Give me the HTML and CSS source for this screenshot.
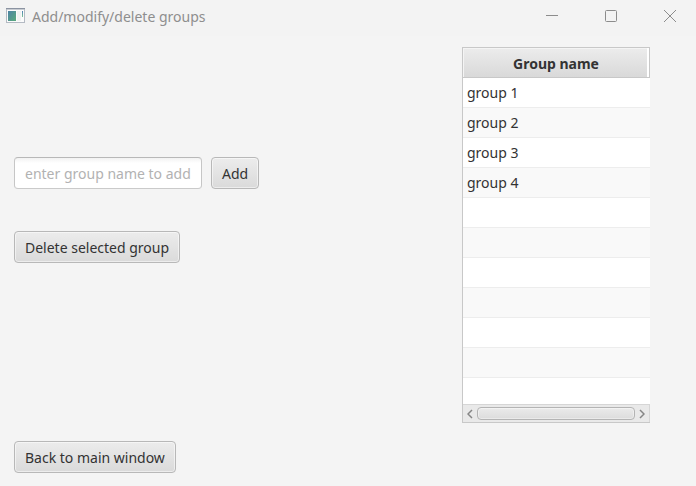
FILE: index.html
```html
<!DOCTYPE html>
<html lang="en">
<head>
<meta charset="utf-8">
<title>Add/modify/delete groups</title>
<link rel="stylesheet" href="styles.css">
</head>
<body>
<header class="titlebar">
  <svg class="app-icon" width="20" height="16" viewBox="0 0 20 16" aria-hidden="true">
    <defs>
      <linearGradient id="pane" x1="0" y1="0" x2="1" y2="1">
        <stop offset="0" stop-color="#4d83a5"/>
        <stop offset="1" stop-color="#59ab7c"/>
      </linearGradient>
      <linearGradient id="strip" x1="0" y1="0" x2="0" y2="1">
        <stop offset="0" stop-color="#4c7fb8"/>
        <stop offset="1" stop-color="#7cc493"/>
      </linearGradient>
    </defs>
    <rect x="0.5" y="0.5" width="18" height="14" fill="#fbfbfb" stroke="#b4bac3"/>
    <path d="M0 .5H19" stroke="#8b93a1"/>
    <path d="M1 1.5H18" stroke="#c8ccd2"/>
    <rect x="2" y="3" width="8" height="10" fill="url(#pane)"/>
    <rect x="11" y="3" width="4" height="10" fill="#f0f2f1"/>
    <rect x="16" y="3" width="1" height="6" fill="url(#strip)"/>
  </svg>
  <h1 class="title">Add/modify/delete groups</h1>
  <div class="window-controls">
    <button class="window-button" type="button" aria-label="Minimize">
      <svg width="12" height="12" viewBox="0 0 12 12"><path d="M0 5.5H12"/></svg>
    </button>
    <button class="window-button" type="button" aria-label="Maximize">
      <svg width="12" height="12" viewBox="0 0 12 12"><rect x="0.5" y="0.5" width="11" height="11" rx="1"/></svg>
    </button>
    <button class="window-button" type="button" aria-label="Close">
      <svg width="12" height="12" viewBox="0 0 12 12"><path d="M0 0L12 12M12 0L0 12"/></svg>
    </button>
  </div>
</header>
<main class="content">
  <section class="actions">
    <form class="add-form">
      <input class="field" type="text" aria-label="Group name" placeholder="enter group name to add">
      <button class="button" type="button">Add</button>
    </form>
    <button class="button" type="button">Delete selected group</button>
    <button class="button back" type="button">Back to main window</button>
  </section>
  <section class="table-view">
    <table class="groups">
      <thead><tr><th scope="col">Group name</th></tr></thead>
      <tbody>
        <tr><td>group 1</td></tr>
        <tr><td>group 2</td></tr>
        <tr><td>group 3</td></tr>
        <tr><td>group 4</td></tr>
        <tr><td></td></tr>
        <tr><td></td></tr>
        <tr><td></td></tr>
        <tr><td></td></tr>
        <tr><td></td></tr>
        <tr><td></td></tr>
        <tr class="last"><td></td></tr>
      </tbody>
    </table>
    <div class="scrollbar">
      <button class="arrow" type="button" aria-label="Scroll left">
        <svg width="6" height="10" viewBox="0 0 6 10"><path d="M5 1L1 5L5 9"/></svg>
      </button>
      <div class="thumb"></div>
      <button class="arrow" type="button" aria-label="Scroll right">
        <svg width="6" height="10" viewBox="0 0 6 10"><path d="M1 1L5 5L1 9"/></svg>
      </button>
    </div>
  </section>
</main>
</body>
</html>
```
FILE: styles.css
```css
* {
  box-sizing: border-box;
}

body {
  margin: 0;
  min-height: 100vh;
  display: flex;
  flex-direction: column;
  background: #f4f4f4;
  color: #333;
  font-family: "Noto Sans", "Open Sans", sans-serif;
  font-size: 14px;
  line-height: 20px;
}

.titlebar {
  display: flex;
  align-items: center;
  height: 36px;
  padding: 0 3px 4px 6px;
  background: #f3f3f3;
}

.app-icon {
  margin-right: 6px;
}

.title {
  flex: 1;
  margin: 0;
  padding-top: 2px;
  color: #8e8e8e;
  font-size: 14px;
  font-weight: 400;
}

.window-controls {
  display: flex;
  gap: 13px;
}

.window-button {
  display: flex;
  align-items: center;
  justify-content: center;
  width: 46px;
  height: 32px;
  padding: 0;
  border: 0;
  background: none;
}

.window-button svg {
  fill: none;
  stroke: #8c8c8c;
}

.content {
  flex: 1;
  display: flex;
  align-items: flex-start;
  justify-content: space-between;
  padding: 11px 46px 13px 14px;
}

.actions {
  align-self: stretch;
  display: flex;
  flex-direction: column;
  align-items: flex-start;
  gap: 42px;
  padding-top: 110px;
}

.add-form {
  display: flex;
  gap: 9px;
}

.field,
.button {
  height: 32px;
  padding: 0 10px;
  border: 1px solid #b8b8b8;
  border-radius: 4px;
  color: #333;
  font: inherit;
}

.field {
  width: 188px;
  border-color: #b8b8b8 #c6c6c6 #cacaca;
  background: linear-gradient(#f2f2f2, #fff 5px);
}

.field::placeholder {
  color: #b2b2b2;
}

.button {
  padding-top: 2px;
  background: linear-gradient(#ececec, #dadada);
  box-shadow: inset 0 0 0 1px rgba(255, 255, 255, 0.5);
}

.back {
  margin-top: auto;
}

.table-view {
  width: 188px;
  border: 1px solid #c8c8c8;
  border-right: 0;
}

.groups {
  width: 100%;
  border-collapse: separate;
  border-spacing: 0;
}

.groups th {
  height: 30px;
  padding: 2px 0 0;
  border: solid #c8c8c8;
  border-width: 0 1px 1px 0;
  background: linear-gradient(#ececec, #d9d9d9);
  box-shadow: inset -2px 0 #fff, inset 1px 1px #f4f4f4;
  font-weight: 700;
}

.groups td {
  height: 30px;
  padding: 0 4px;
  border-bottom: 1px solid #ededed;
  background: #fff;
}

.groups tr:nth-child(even) td {
  background: #f9f9f9;
}

.groups .last td {
  height: 26px;
  border-bottom: 0;
}

.scrollbar {
  display: flex;
  align-items: stretch;
  height: 18px;
  padding: 2px 0;
  border: solid #d6d6d6;
  border-width: 1px 1px 0 0;
  background: #e9e9e9;
}

.arrow {
  display: flex;
  align-items: center;
  justify-content: center;
  width: 14px;
  padding: 0;
  border: 0;
  background: none;
}

.arrow svg {
  fill: none;
  stroke: #858585;
  stroke-width: 1.5;
}

.thumb {
  flex: 1;
  border: 1px solid #b4b4b4;
  border-radius: 4px;
  background: linear-gradient(#ebebeb, #dcdcdc);
  box-shadow: inset 0 0 0 1px rgba(255, 255, 255, 0.4);
}
```
